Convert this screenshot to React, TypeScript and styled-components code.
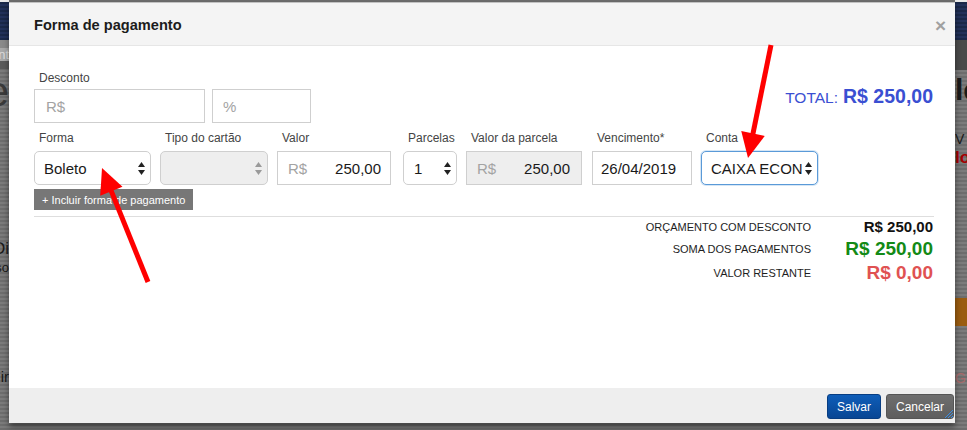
import React from "react";
import styled, { createGlobalStyle, css } from "styled-components";

const Global = createGlobalStyle`
  html, body { margin: 0; padding: 0; }
  body {
    font-family: "Liberation Sans", Arial, Helvetica, sans-serif;
    overflow: hidden;
    background: #6f6f6f;
  }
  * { box-sizing: border-box; }
`;

const stripes = css`
  background-image: repeating-linear-gradient(
    0deg,
    #6d6d6d 0px,
    #6d6d6d 2px,
    #7b7b7b 2px,
    #7b7b7b 4px
  );
`;

const Page = styled.div`
  position: relative;
  width: 967px;
  height: 430px;
  display: flex;
  align-items: flex-start;
  ${stripes};
  overflow: hidden;
`;

const Strip = styled.div<{ $w: number; $align: "left" | "right" }>`
  width: ${(p) => p.$w}px;
  flex: none;
  height: 430px;
  display: flex;
  flex-direction: column;
  overflow: hidden;
  align-items: ${(p) => (p.$align === "right" ? "flex-end" : "flex-start")};
`;

const Band = styled.div<{ $h: number; $bg?: string; $color?: string; $size?: number; $bold?: boolean }>`
  height: ${(p) => p.$h}px;
  width: 100%;
  flex: none;
  background: ${(p) => p.$bg || "transparent"};
  color: ${(p) => p.$color || "#222"};
  font-size: ${(p) => p.$size || 13}px;
  font-weight: ${(p) => (p.$bold ? 700 : 400)};
  line-height: ${(p) => p.$h}px;
  white-space: nowrap;
  display: flex;
  justify-content: inherit;
`;

const StripText = styled.span<{ $end?: boolean }>`
  display: block;
  width: 100%;
  text-align: ${(p) => (p.$end ? "right" : "left")};
  overflow: hidden;
  direction: ${(p) => (p.$end ? "rtl" : "ltr")};
`;

const Modal = styled.div`
  position: relative;
  width: 946px;
  height: 421px;
  margin-top: 2px;
  flex: none;
  display: flex;
  flex-direction: column;
  background: #fff;
  border-top: 1px solid #c2c2c2;
  box-shadow: 0 4px 6px rgba(0, 0, 0, 0.45);
`;

const Header = styled.div`
  height: 43px;
  flex: none;
  display: flex;
  align-items: center;
  justify-content: space-between;
  padding: 0 9px 0 25px;
  background: #f4f4f4;
  border-bottom: 1px solid #e6e6e6;
`;

const Title = styled.h1`
  margin: 0;
  font-size: 14.6px;
  font-weight: 700;
  color: #1c1c1c;
  padding-top: 1px;
`;

const Close = styled.span`
  font-size: 19px;
  font-weight: 700;
  color: #a0a0a0;
  line-height: 1;
  padding-top: 3px;
`;

const Body = styled.div`
  flex: 1;
  padding: 24px 21px 0 25px;
  display: flex;
  flex-direction: column;
`;

const Row1 = styled.div`
  display: flex;
  justify-content: space-between;
  align-items: flex-start;
`;

const FieldCol = styled.div<{ $w?: number; $ml?: number }>`
  display: flex;
  flex-direction: column;
  flex: none;
  ${(p) => (p.$w ? `width: ${p.$w}px;` : "")}
  margin-left: ${(p) => p.$ml || 0}px;
`;

const Label = styled.label<{ $mb: number }>`
  display: block;
  font-size: 12px;
  line-height: 16px;
  color: #444;
  padding-left: 5px;
  margin-bottom: ${(p) => p.$mb}px;
  white-space: nowrap;
`;

const InputRow = styled.div`
  display: flex;
  gap: 7px;
`;

const Box = styled.div<{ $w?: number; $disabled?: boolean; $rounded?: boolean; $focus?: boolean; $pl?: number; $pr?: number }>`
  ${(p) => (p.$w ? `width: ${p.$w}px;` : "width: 100%;")}
  height: 34px;
  display: flex;
  align-items: center;
  justify-content: space-between;
  padding: 0 ${(p) => p.$pr ?? 9}px 0 ${(p) => p.$pl ?? 10}px;
  border: 1px solid ${(p) => (p.$focus ? "#5a9ad8" : "#cfcfcf")};
  border-radius: ${(p) => (p.$rounded ? 5 : 0)}px;
  background: ${(p) => (p.$disabled ? "#eeeeee" : "#fff")};
  font-size: 15px;
  color: #1a1a1a;
  white-space: nowrap;
  overflow: hidden;
  ${(p) => (p.$focus ? "box-shadow: 0 0 0 1px rgba(90,154,216,0.25);" : "")}
`;

const Placeholder = styled.span`
  color: #a3a3a3;
`;

const Value = styled.span`
  color: #1a1a1a;
`;

const Total = styled.div`
  margin-top: 14px;
  line-height: 24px;
  color: #3a4fd2;
  white-space: nowrap;
  padding-right: 1px;
`;

const TotalLabel = styled.span`
  font-size: 15.5px;
`;

const TotalValue = styled.span`
  font-size: 19.5px;
  font-weight: 700;
  margin-left: 5px;
`;

const Row2 = styled.div`
  display: flex;
  margin-top: 7px;
`;

const AddButton = styled.button`
  align-self: flex-start;
  margin-top: 4px;
  height: 21px;
  width: 159px;
  padding: 0 0 0 8px;
  text-align: left;
  border: none;
  border-radius: 0;
  background: #777;
  color: #fff;
  font-family: inherit;
  font-size: 11px;
  white-space: nowrap;
`;

const Divider = styled.hr`
  margin: 6px 0 0 0;
  border: none;
  border-top: 1px solid #dedede;
  height: 0;
`;

const Summary = styled.div`
  display: grid;
  grid-template-columns: auto 123px;
  grid-auto-rows: auto;
  justify-content: end;
  align-items: center;
`;

const SumLabel = styled.div<{ $h: number }>`
  height: ${(p) => p.$h}px;
  line-height: ${(p) => p.$h}px;
  font-size: 11px;
  color: #1e1e1e;
  text-align: right;
`;

const SumValue = styled.div<{ $h: number; $size: number; $color: string }>`
  height: ${(p) => p.$h}px;
  line-height: ${(p) => p.$h}px;
  font-size: ${(p) => p.$size}px;
  font-weight: 700;
  color: ${(p) => p.$color};
  text-align: right;
  padding-right: 1px;
`;

const Footer = styled.div`
  height: 35px;
  flex: none;
  background: #eeeeee;
  display: flex;
  justify-content: flex-end;
  align-items: flex-start;
  gap: 5px;
  padding: 6px 1px 0 0;
`;

const Btn = styled.button<{ $variant: "primary" | "default"; $w: number }>`
  width: ${(p) => p.$w}px;
  height: 25px;
  border-radius: 3px;
  font-family: inherit;
  font-size: 12px;
  color: #fff;
  padding: 0;
  ${(p) =>
    p.$variant === "primary"
      ? css`
          background: linear-gradient(#0e5db8, #084694);
          border: 1px solid #073d82;
        `
      : css`
          background: linear-gradient(#6e6e6e, #5e5e5e);
          border: 1px solid #555;
        `}
`;

const Overlay = styled.svg`
  position: absolute;
  left: 0;
  top: 0;
  pointer-events: none;
`;

const Grip = styled.svg`
  position: absolute;
  right: 1px;
  bottom: 4px;
  pointer-events: none;
`;

const Arrows = ({ color = "#222" }: { color?: string }) => (
  <svg width="7" height="13" viewBox="0 0 7 13">
    <path d="M3.5 0 L7 5 L0 5 Z" fill={color} />
    <path d="M0 8 L7 8 L3.5 13 Z" fill={color} />
  </svg>
);

function arrowPoints(x1: number, y1: number, tx: number, ty: number, len = 25, half = 12) {
  const dx = tx - x1;
  const dy = ty - y1;
  const l = Math.hypot(dx, dy);
  const ux = dx / l;
  const uy = dy / l;
  const bx = tx - ux * len;
  const by = ty - uy * len;
  const px = -uy;
  const py = ux;
  return {
    line: { x1, y1, x2: bx + ux * 2, y2: by + uy * 2 },
    head: `${tx},${ty} ${bx + px * half},${by + py * half} ${bx - px * half},${by - py * half}`,
  };
}

const RedArrow = ({ x1, y1, tx, ty }: { x1: number; y1: number; tx: number; ty: number }) => {
  const a = arrowPoints(x1, y1, tx, ty);
  return (
    <g>
      <line {...a.line} stroke="#ff0000" strokeWidth={5} strokeLinecap="butt" />
      <polygon points={a.head} fill="#ff0000" />
    </g>
  );
};

export default function App() {
  return (
    <>
      <Global />
      <Page>
        <Strip $w={9} $align="right">
          <Band $h={2} $bg="#e9e9e9" />
          <Band $h={38} $bg="repeating-linear-gradient(0deg,#1a2849 0 2px,#22315a 2px 4px)" />
          <Band $h={8} $bg="#8a8a8a" />
          <Band $h={13} $bg="#a9a9a9" $color="#dcdcdc" $size={13}>
            <StripText $end>nt</StripText>
          </Band>
          <Band $h={8} $bg="#5a5a5a" />
          <Band $h={46} $color="#3a3a3a" $size={42}>
            <StripText $end>e</StripText>
          </Band>
          <Band $h={124} />
          <Band $h={20} $color="#1a1a1a" $size={17}>
            <StripText $end>Di</StripText>
          </Band>
          <Band $h={18} $color="#1a1a1a" $size={13}>
            <StripText $end>so</StripText>
          </Band>
          <Band $h={90} />
          <Band $h={20} $color="#1a1a1a" $size={15}>
            <StripText $end>ir</StripText>
          </Band>
        </Strip>

        <Modal>
          <Header>
            <Title>Forma de pagamento</Title>
            <Close>×</Close>
          </Header>

          <Body>
            <Row1>
              <FieldCol>
                <Label $mb={3}>Desconto</Label>
                <InputRow>
                  <Box $w={171} $pl={11}>
                    <Placeholder>R$</Placeholder>
                  </Box>
                  <Box $w={99} $pl={10}>
                    <Placeholder>%</Placeholder>
                  </Box>
                </InputRow>
              </FieldCol>
              <Total>
                <TotalLabel>TOTAL:</TotalLabel>
                <TotalValue>R$ 250,00</TotalValue>
              </Total>
            </Row1>

            <Row2>
              <FieldCol $w={117}>
                <Label $mb={5}>Forma</Label>
                <Box $rounded $pl={9} $pr={5}>
                  <Value>Boleto</Value>
                  <Arrows />
                </Box>
              </FieldCol>
              <FieldCol $w={108} $ml={9}>
                <Label $mb={5}>Tipo do cartão</Label>
                <Box $rounded $disabled $pr={5}>
                  <span />
                  <Arrows color="#9a9a9a" />
                </Box>
              </FieldCol>
              <FieldCol $w={114} $ml={9}>
                <Label $mb={5}>Valor</Label>
                <Box $pl={10} $pr={9}>
                  <Placeholder>R$</Placeholder>
                  <Value>250,00</Value>
                </Box>
              </FieldCol>
              <FieldCol $w={54} $ml={12}>
                <Label $mb={5}>Parcelas</Label>
                <Box $rounded $pl={10} $pr={5}>
                  <Value>1</Value>
                  <Arrows />
                </Box>
              </FieldCol>
              <FieldCol $w={116} $ml={9}>
                <Label $mb={5}>Valor da parcela</Label>
                <Box $disabled $pl={10} $pr={11}>
                  <Placeholder>R$</Placeholder>
                  <Value>250,00</Value>
                </Box>
              </FieldCol>
              <FieldCol $w={100} $ml={10}>
                <Label $mb={5}>Vencimento*</Label>
                <Box $pl={8}>
                  <Value>26/04/2019</Value>
                </Box>
              </FieldCol>
              <FieldCol $w={117} $ml={9}>
                <Label $mb={5}>Conta</Label>
                <Box $rounded $focus $pl={9} $pr={5}>
                  <Value>CAIXA ECON</Value>
                  <Arrows />
                </Box>
              </FieldCol>
            </Row2>

            <AddButton>+ Incluir forma de pagamento</AddButton>
            <Divider />

            <Summary>
              <SumLabel $h={20}>ORÇAMENTO COM DESCONTO</SumLabel>
              <SumValue $h={20} $size={15} $color="#111">R$ 250,00</SumValue>
              <SumLabel $h={24}>SOMA DOS PAGAMENTOS</SumLabel>
              <SumValue $h={24} $size={19} $color="#138a16">R$ 250,00</SumValue>
              <SumLabel $h={24}>VALOR RESTANTE</SumLabel>
              <SumValue $h={24} $size={19} $color="#e05252">R$ 0,00</SumValue>
            </Summary>
          </Body>

          <Footer>
            <Btn $variant="primary" $w={54}>Salvar</Btn>
            <Btn $variant="default" $w={68}>Cancelar</Btn>
          </Footer>

          <Grip width="10" height="10" viewBox="0 0 10 10">
            <path d="M9 1 L1 9 M9 4 L4 9 M9 7 L7 9" stroke="#3a8ee6" strokeWidth="1" />
          </Grip>
        </Modal>

        <Strip $w={12} $align="left">
          <Band $h={2} $bg="#e9e9e9" />
          <Band $h={38} $bg="repeating-linear-gradient(0deg,#1a2849 0 2px,#22315a 2px 4px)" />
          <Band $h={30} $bg="#4a4a4a" />
          <Band $h={40} $color="#1a1a1a" $size={30} $bold>
            <StripText>le</StripText>
          </Band>
          <Band $h={20} />
          <Band $h={18} $color="#1a1a1a" $size={14}>
            <StripText>V</StripText>
          </Band>
          <Band $h={20} $color="#a40000" $size={17} $bold>
            <StripText>lo</StripText>
          </Band>
          <Band $h={130} />
          <Band $h={28} $bg="#9a5c10" />
          <Band $h={44} />
          <Band $h={16} $color="#a86a6a" $size={14}>
            <StripText>G</StripText>
          </Band>
        </Strip>

        <Overlay width="967" height="430" viewBox="0 0 967 430">
          <RedArrow x1={148} y1={282} tx={102} ty={168} />
          <RedArrow x1={771} y1={45} tx={748} ty={158} />
        </Overlay>
      </Page>
    </>
  );
}
